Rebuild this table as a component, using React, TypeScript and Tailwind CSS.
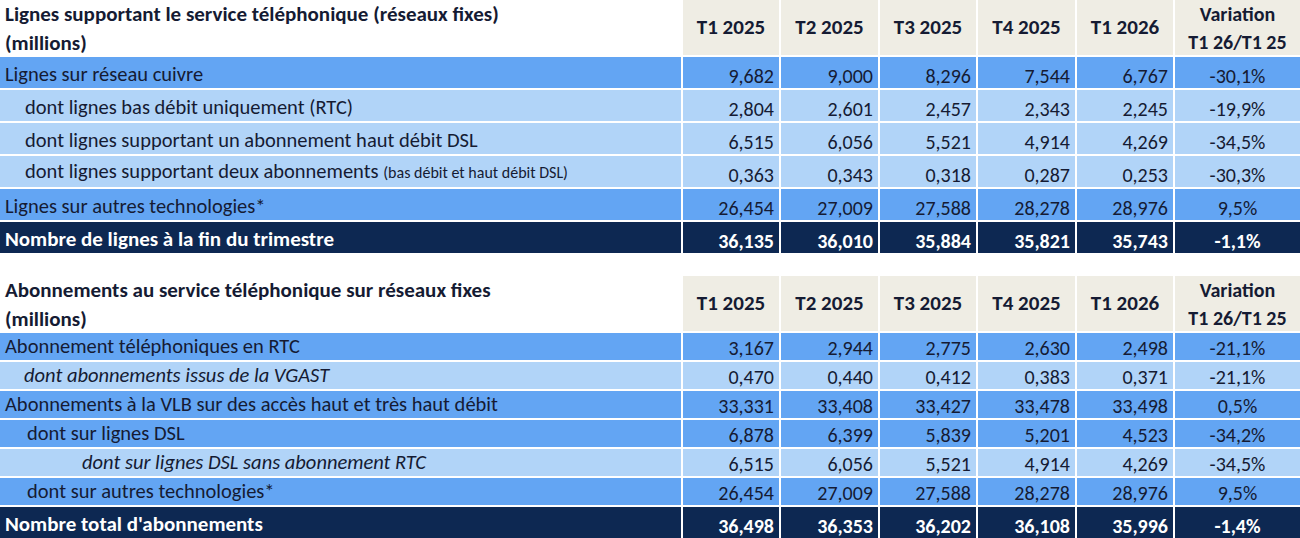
import React from "react";

type Row = {
  label: React.ReactNode;
  values: string[];
  variant: "mid" | "light" | "dark";
  indent?: string;
  italic?: boolean;
};

const table1: Row[] = [
  { label: "Lignes sur réseau cuivre", values: ["9,682", "9,000", "8,296", "7,544", "6,767", "-30,1%"], variant: "mid" },
  { label: "dont lignes bas débit uniquement (RTC)", values: ["2,804", "2,601", "2,457", "2,343", "2,245", "-19,9%"], variant: "light", indent: "pl-[25px]" },
  { label: "dont lignes supportant un abonnement haut débit DSL", values: ["6,515", "6,056", "5,521", "4,914", "4,269", "-34,5%"], variant: "light", indent: "pl-[25px]" },
  {
    label: (
      <>
        dont lignes supportant deux abonnements <span className="text-[16px]">(bas débit et haut débit DSL)</span>
      </>
    ),
    values: ["0,363", "0,343", "0,318", "0,287", "0,253", "-30,3%"],
    variant: "light",
    indent: "pl-[25px]",
  },
  { label: "Lignes sur autres technologies*", values: ["26,454", "27,009", "27,588", "28,278", "28,976", "9,5%"], variant: "mid" },
  { label: "Nombre de lignes à la fin du trimestre", values: ["36,135", "36,010", "35,884", "35,821", "35,743", "-1,1%"], variant: "dark" },
];

const table2: Row[] = [
  { label: "Abonnement téléphoniques en RTC", values: ["3,167", "2,944", "2,775", "2,630", "2,498", "-21,1%"], variant: "mid" },
  { label: "dont abonnements issus de la VGAST", values: ["0,470", "0,440", "0,412", "0,383", "0,371", "-21,1%"], variant: "light", indent: "pl-[24px]", italic: true },
  { label: "Abonnements à la VLB sur des accès haut et très haut débit", values: ["33,331", "33,408", "33,427", "33,478", "33,498", "0,5%"], variant: "mid" },
  { label: "dont sur lignes DSL", values: ["6,878", "6,399", "5,839", "5,201", "4,523", "-34,2%"], variant: "mid", indent: "pl-[27px]" },
  { label: "dont sur lignes DSL sans abonnement RTC", values: ["6,515", "6,056", "5,521", "4,914", "4,269", "-34,5%"], variant: "light", indent: "pl-[82px]", italic: true },
  { label: "dont sur autres technologies*", values: ["26,454", "27,009", "27,588", "28,278", "28,976", "9,5%"], variant: "mid", indent: "pl-[27px]" },
  { label: "Nombre total d'abonnements", values: ["36,498", "36,353", "36,202", "36,108", "35,996", "-1,4%"], variant: "dark" },
];

const quarters = ["T1 2025", "T2 2025", "T3 2025", "T4 2025", "T1 2026"];

const bg = {
  mid: "bg-[#63a5f3] text-[#151b33]",
  light: "bg-[#b1d4f8] text-[#151b33]",
  dark: "bg-[#0d2852] text-white font-bold",
};

function Table({ title, rows, rowH, lastH }: { title: string; rows: Row[]; rowH: string; lastH: string }) {
  return (
    <div className="grid grid-cols-[681px_96px_97px_96px_97px_96px_125px] gap-[2px]">
      <div className="h-[55px] bg-white pl-[5px] font-bold text-[21px] leading-[29px] text-[#151b33]">
        <div>{title}</div>
        <div>(millions)</div>
      </div>
      {quarters.map((q) => (
        <div key={q} className="h-[55px] bg-[#efede4] flex items-center justify-center font-bold text-[21px] text-[#151b33]">
          {q}
        </div>
      ))}
      <div className="h-[55px] bg-[#efede4] flex flex-col items-center justify-center font-bold text-[20px] leading-[28px] text-[#151b33]">
        <div>Variation</div>
        <div>T1 26/T1 25</div>
      </div>
      {rows.map((r, i) => {
        const h = i === rows.length - 1 ? lastH : rowH;
        const cls = `${bg[r.variant]} ${h}`;
        const labelSize = r.variant === "dark" ? "text-[21px]" : "text-[20.5px]";
        return (
          <React.Fragment key={i}>
            <div
              className={`${cls} flex items-end pb-[2px] ${labelSize} leading-[24px] ${r.indent ?? "pl-[5px]"} ${r.italic ? "italic" : ""} whitespace-nowrap`}
            >
              <span>{r.label}</span>
            </div>
            {r.values.slice(0, 5).map((v, j) => (
              <div key={j} className={`${cls} flex items-end justify-end pr-[5px] pb-[1px] text-[20px] leading-[22px]`}>
                {v}
              </div>
            ))}
            <div className={`${cls} flex items-end justify-center pb-[1px] text-[20px] leading-[22px]`}>{r.values[5]}</div>
          </React.Fragment>
        );
      })}
    </div>
  );
}

export default function App() {
  return (
    <div
      className="w-[1300px] h-[538px] bg-white overflow-hidden"
      style={{ fontFamily: "Carlito, Lato, 'Open Sans', sans-serif" }}
    >
      <Table title="Lignes supportant le service téléphonique (réseaux fixes)" rows={table1} rowH="h-[31px]" lastH="h-[31px]" />
      <div className="h-[23px]" />
      <Table title="Abonnements au service téléphonique sur réseaux fixes" rows={table2} rowH="h-[27px]" lastH="h-[31px]" />
    </div>
  );
}
